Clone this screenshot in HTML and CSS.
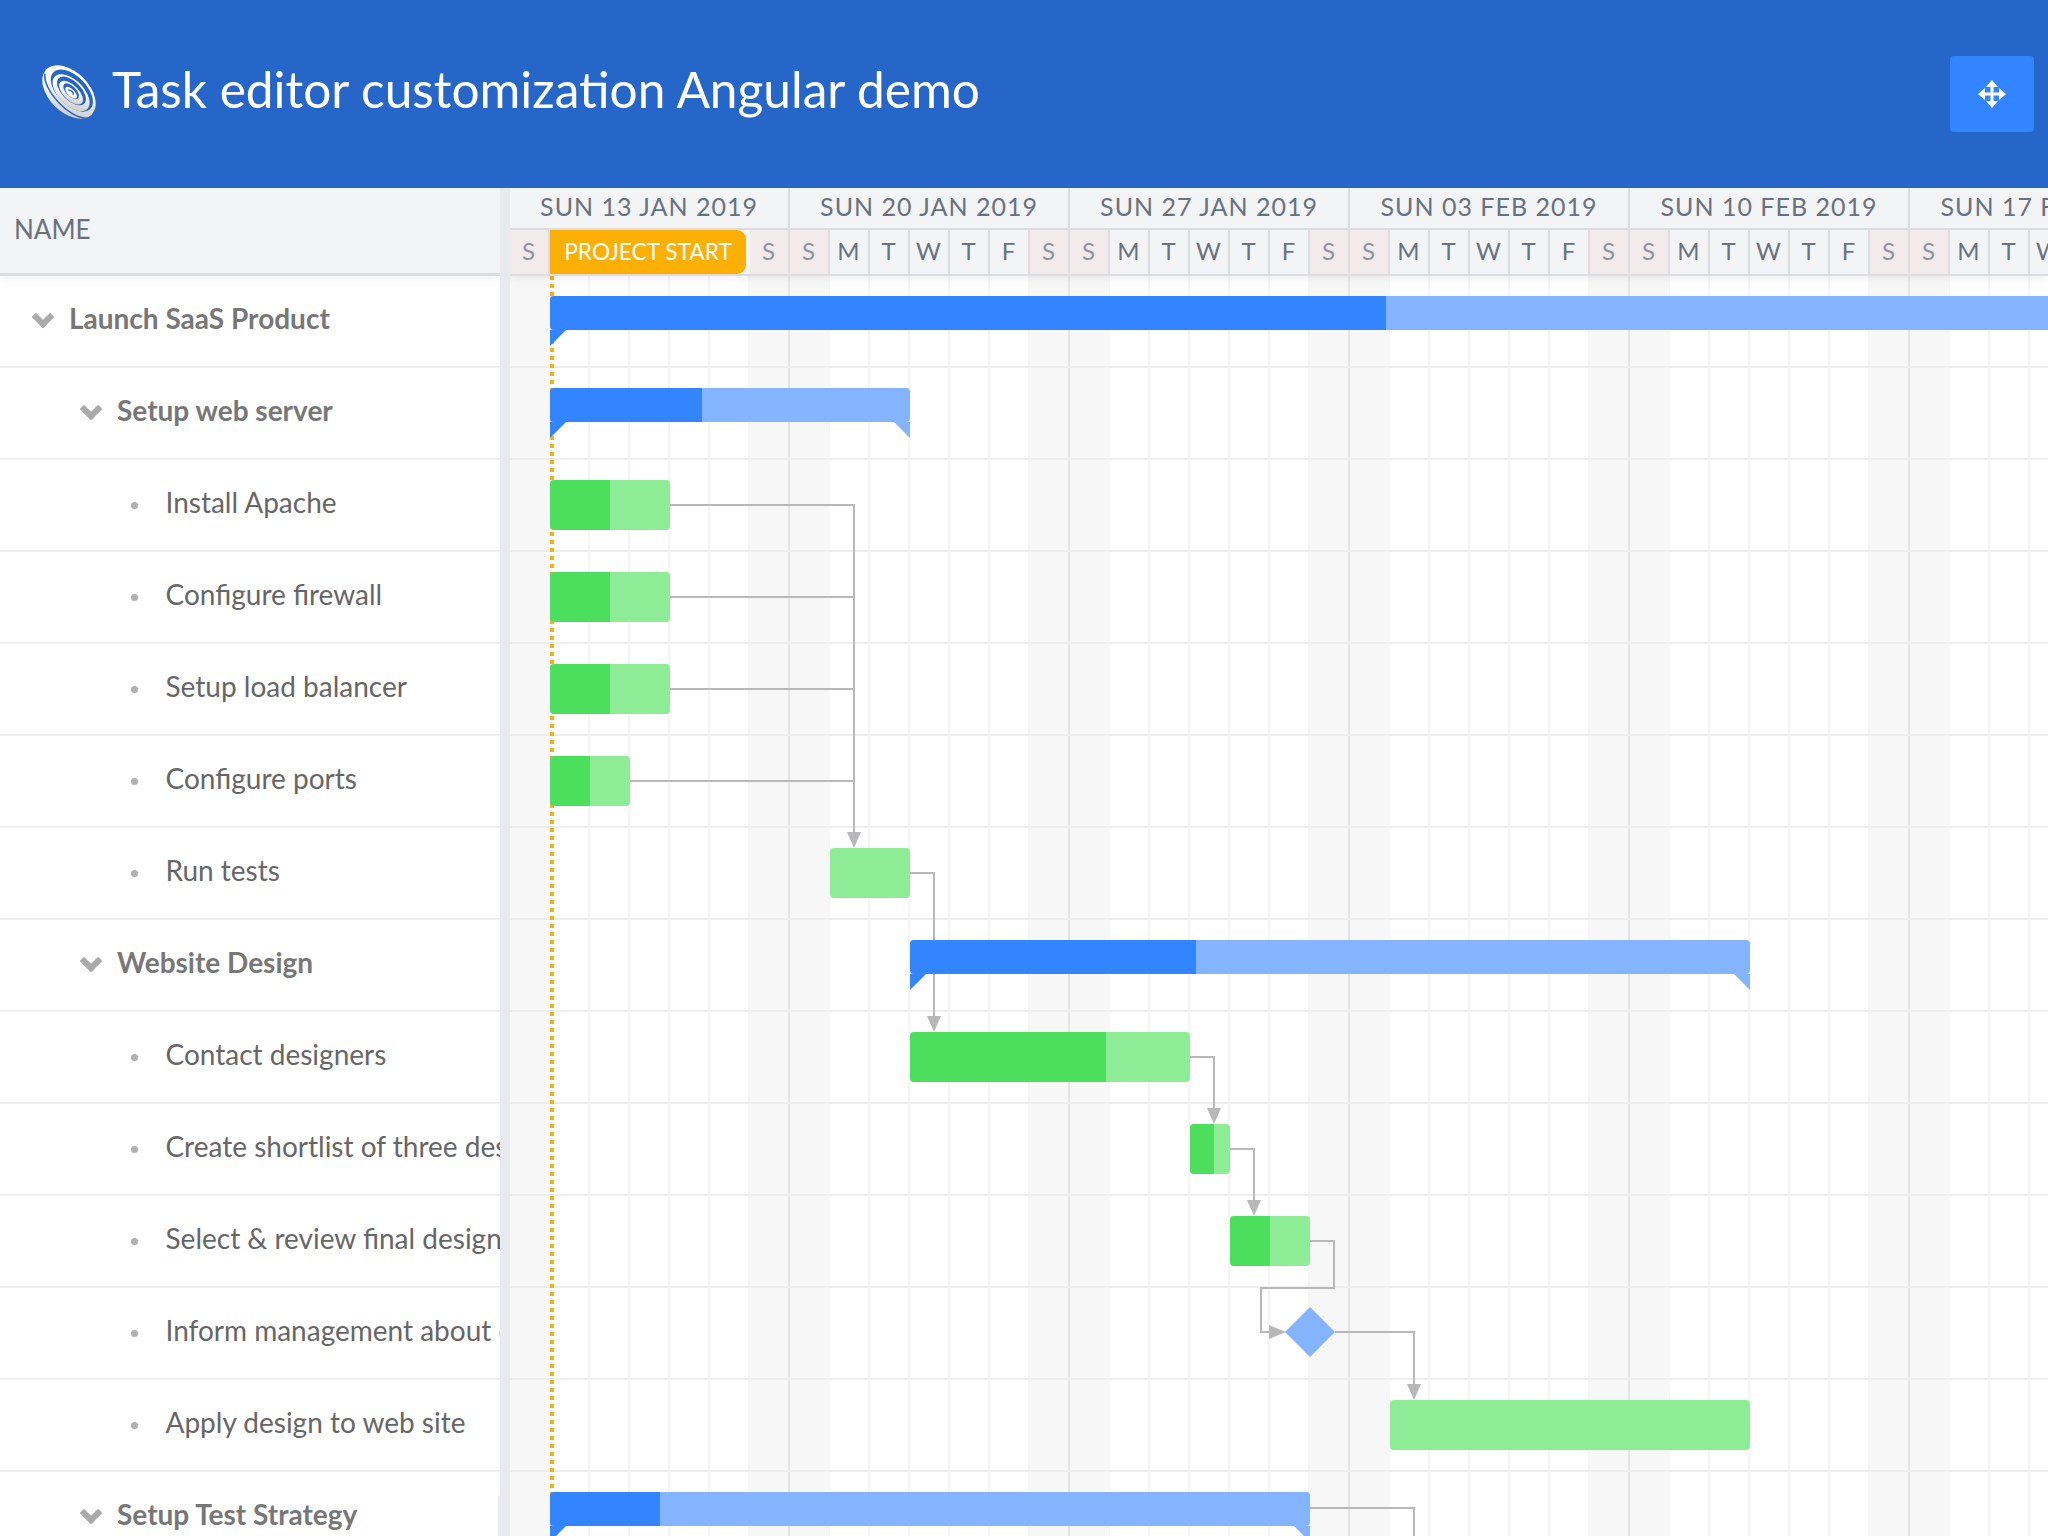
FILE: index.html
```html
<!DOCTYPE html>
<html lang="en">
<head>
    <meta charset="UTF-8">
    <title>Task editor customization Angular demo</title>
    <link rel="stylesheet" href="styles.css">
</head>
<body>
    <header class="topbar">
        <svg class="logo" viewBox="0 0 54 54">
            <defs>
                <linearGradient id="logoFill" x1="0" y1="0" x2="1" y2="1">
                    <stop offset="0.4" stop-color="#ffffff"/>
                    <stop offset="1" stop-color="#bdbdbd"/>
                </linearGradient>
            </defs>
            <g transform="rotate(45 27 27)">
                <ellipse cx="27" cy="27" rx="32" ry="20" fill="url(#logoFill)"/>
                <path d="M-3 31C6 44 46 46 58 33" fill="none" stroke="#2566c8" stroke-width="1.500"/>
                <ellipse cx="28" cy="24" rx="26" ry="14.500" fill="#2566c8"/>
                <ellipse cx="29" cy="26" rx="23" ry="12.500" fill="url(#logoFill)"/>
                <ellipse cx="28" cy="24.500" rx="18" ry="9.500" fill="#2566c8"/>
                <ellipse cx="29" cy="26" rx="15" ry="7.500" fill="url(#logoFill)"/>
                <ellipse cx="28" cy="25" rx="10" ry="5" fill="#2566c8"/>
                <ellipse cx="29" cy="26" rx="7.500" ry="3.500" fill="#fff"/>
                <path d="M25 26c2-2 6-2 7 0" fill="none" stroke="#2566c8" stroke-width="1.500"/>
            </g>
        </svg>
        <h1 class="title">Task editor customization Angular demo</h1>
        <button class="expand-btn" type="button">
            <svg viewBox="0 0 28 28" class="expand-icon">
                <path d="M14 0l6 7h-4.500v5.500H21V8l7 6-7 6v-4.500h-5.500V21H20l-6 7-6-7h4.500v-5.500H7V20l-7-6 7-6v4.500h5.500V7H8z" fill="#fff"/>
            </svg>
        </button>
    </header>

    <div class="gantt">
        <section class="side">
            <div class="side-head">NAME</div>
            <div class="tree">
                <div class="tree-row parent"><span class="chevron"></span>Launch SaaS Product</div>
                <div class="tree-row parent lvl1"><span class="chevron"></span>Setup web server</div>
                <div class="tree-row leaf"><span class="dot"></span>Install Apache</div>
                <div class="tree-row leaf"><span class="dot"></span>Configure firewall</div>
                <div class="tree-row leaf"><span class="dot"></span>Setup load balancer</div>
                <div class="tree-row leaf"><span class="dot"></span>Configure ports</div>
                <div class="tree-row leaf"><span class="dot"></span>Run tests</div>
                <div class="tree-row parent lvl1"><span class="chevron"></span>Website Design</div>
                <div class="tree-row leaf"><span class="dot"></span>Contact designers</div>
                <div class="tree-row leaf"><span class="dot"></span>Create shortlist of three designers</div>
                <div class="tree-row leaf"><span class="dot"></span>Select &amp; review final design</div>
                <div class="tree-row leaf"><span class="dot"></span>Inform management about decision</div>
                <div class="tree-row leaf"><span class="dot"></span>Apply design to web site</div>
                <div class="tree-row parent lvl1 last"><span class="chevron"></span>Setup Test Strategy</div>
            </div>
        </section>

        <div class="splitter"></div>

        <section class="timeline">
            <div class="time-head">
                <div class="weeks">
                    <div class="week">SUN 13 JAN 2019</div>
                    <div class="week">SUN 20 JAN 2019</div>
                    <div class="week">SUN 27 JAN 2019</div>
                    <div class="week">SUN 03 FEB 2019</div>
                    <div class="week">SUN 10 FEB 2019</div>
                    <div class="week">SUN 17 FEB 2019</div>
                </div>
                <div class="days">
                    <span class="day off">S</span><span class="day hidden-day"></span><span class="day hidden-day"></span><span class="day hidden-day"></span><span class="day hidden-day"></span><span class="day hidden-day"></span><span class="day off">S</span>
                    <span class="day off">S</span><span class="day">M</span><span class="day">T</span><span class="day">W</span><span class="day">T</span><span class="day">F</span><span class="day off">S</span>
                    <span class="day off">S</span><span class="day">M</span><span class="day">T</span><span class="day">W</span><span class="day">T</span><span class="day">F</span><span class="day off">S</span>
                    <span class="day off">S</span><span class="day">M</span><span class="day">T</span><span class="day">W</span><span class="day">T</span><span class="day">F</span><span class="day off">S</span>
                    <span class="day off">S</span><span class="day">M</span><span class="day">T</span><span class="day">W</span><span class="day">T</span><span class="day">F</span><span class="day off">S</span>
                    <span class="day off">S</span><span class="day">M</span><span class="day">T</span><span class="day">W</span>
                </div>
                <div class="project-start">PROJECT START</div>
            </div>

            <div class="chart">
                <div class="start-line"></div>

                <!-- connectors, coordinates are relative to the chart (x-510, y-276) -->
                <svg class="links" width="1538" height="1260">
                    <g fill="none" stroke="#b8b8b8" stroke-width="2">
                        <path d="M160 229H344V556"/>
                        <path d="M160 321H344"/>
                        <path d="M160 413H344"/>
                        <path d="M120 505H344"/>
                        <path d="M400 597H424V742"/>
                        <path d="M680 781H704V834"/>
                        <path d="M720 873H744V926"/>
                        <path d="M800 965H824V1012H751V1056H760"/>
                        <path d="M825 1056H904V1110"/>
                        <path d="M800 1232H904V1260"/>
                    </g>
                    <g fill="#b8b8b8">
                        <path d="M337 556h14l-7 16z"/>
                        <path d="M417 740h14l-7 16z"/>
                        <path d="M697 832h14l-7 16z"/>
                        <path d="M737 924h14l-7 16z"/>
                        <path d="M759 1049v14l17-7z"/>
                        <path d="M897 1108h14l-7 16z"/>
                    </g>
                </svg>

                <div class="row">
                    <div class="bar summary left-tail" style="left:40px;width:1520px"><div class="done" style="width:836px"></div></div>
                </div>
                <div class="row">
                    <div class="bar summary left-tail right-tail" style="left:40px;width:360px"><div class="done" style="width:152px"></div></div>
                </div>
                <div class="row">
                    <div class="bar task" style="left:40px;width:120px"><div class="done" style="width:60px"></div></div>
                </div>
                <div class="row">
                    <div class="bar task" style="left:40px;width:120px"><div class="done" style="width:60px"></div></div>
                </div>
                <div class="row">
                    <div class="bar task" style="left:40px;width:120px"><div class="done" style="width:60px"></div></div>
                </div>
                <div class="row">
                    <div class="bar task" style="left:40px;width:80px"><div class="done" style="width:40px"></div></div>
                </div>
                <div class="row">
                    <div class="bar task" style="left:320px;width:80px"></div>
                </div>
                <div class="row">
                    <div class="bar summary left-tail right-tail" style="left:400px;width:840px"><div class="done" style="width:286px"></div></div>
                </div>
                <div class="row">
                    <div class="bar task" style="left:400px;width:280px"><div class="done" style="width:196px"></div></div>
                </div>
                <div class="row">
                    <div class="bar task" style="left:680px;width:40px"><div class="done" style="width:24px"></div></div>
                </div>
                <div class="row">
                    <div class="bar task" style="left:720px;width:80px"><div class="done" style="width:40px"></div></div>
                </div>
                <div class="row">
                    <div class="milestone" style="left:775px"></div>
                </div>
                <div class="row">
                    <div class="bar task" style="left:880px;width:360px"></div>
                </div>
                <div class="row">
                    <div class="bar summary left-tail right-tail" style="left:40px;width:760px"><div class="done" style="width:110px"></div></div>
                </div>
            </div>
        </section>
    </div>
</body>
</html>
```

FILE: styles.css
```css
* {
    box-sizing: border-box;
}

body {
    margin: 0;
    height: 1536px;
    overflow: hidden;
    background-color: #fff;
    font-family: Lato, "Open Sans", sans-serif;
}

/* top bar */
.topbar {
    display: flex;
    align-items: center;
    height: 188px;
    padding: 0 14px 0 42px;
    background-color: #2566c8;
}

.logo {
    width: 54px;
    height: 54px;
    margin-top: -4px;
    flex: none;
}

.title {
    flex: 1;
    margin: -10px 0 0 16px;
    font-size: 49.6px;
    font-weight: 400;
    color: #fff;
}

.expand-btn {
    display: flex;
    align-items: center;
    justify-content: center;
    width: 84px;
    height: 76px;
    padding: 0;
    border: none;
    border-radius: 4px;
    background-color: #3385ff;
}

.expand-icon {
    width: 28px;
    height: 28px;
}

/* gantt */
.gantt {
    display: flex;
    height: 1348px;
}

.side {
    width: 500px;
    flex: none;
    overflow: hidden;
}

.side-head {
    position: relative;
    display: flex;
    align-items: center;
    height: 88px;
    padding-left: 14px;
    padding-bottom: 4px;
    font-size: 26px;
    color: #68727f;
    background-color: #f3f4f6;
    border-bottom: 3px solid #dcdde0;
    box-shadow: 0 3px 10px rgba(0, 0, 0, 0.06);
}

.tree-row {
    position: relative;
    display: flex;
    align-items: center;
    height: 92px;
    padding-bottom: 7px;
    font-size: 28px;
    white-space: nowrap;
    border-bottom: 2px solid #eee;
}

.parent {
    padding-left: 32px;
    font-weight: 700;
    color: #777;
}

.lvl1 {
    padding-left: 80px;
}

.leaf {
    padding-left: 131px;
    color: #666;
}

/* splitter is 2px wider next to the last row */
.last::after {
    content: "";
    position: absolute;
    top: 24px;
    right: 0;
    width: 2px;
    height: 68px;
    background-color: #e9eaed;
}

.chevron {
    flex: none;
    width: 16px;
    height: 16px;
    margin: 0 18px 0 3px;
    transform: translateY(-1px) rotate(45deg);
    border-right: 6px solid #aaa;
    border-bottom: 6px solid #aaa;
}

.dot {
    flex: none;
    width: 7px;
    height: 7px;
    margin-right: 27.5px;
    margin-top: 7px;
    border-radius: 50%;
    background-color: #b0b0b0;
}

.splitter {
    width: 10px;
    flex: none;
    background-color: #e9eaed;
}

.timeline {
    flex: 1;
    min-width: 0;
    overflow: hidden;
}

.time-head {
    position: relative;
    z-index: 3;
    height: 88px;
    background-color: #f3f4f6;
    border-bottom: 2px solid #dcdde0;
    box-shadow: 0 3px 10px rgba(0, 0, 0, 0.06);
}

.weeks {
    display: flex;
    height: 42px;
    border-bottom: 2px solid #dcdde0;
}

.week {
    flex: none;
    width: 280px;
    padding-bottom: 6px;
    line-height: 36px;
    text-align: center;
    font-size: 25px;
    letter-spacing: 1px;
    white-space: nowrap;
    color: #68727f;
    border-right: 2px solid #dcdde0;
}

.days {
    display: flex;
    height: 44px;
}

.day {
    flex: none;
    width: 40px;
    padding-right: 1px;
    line-height: 42px;
    text-align: center;
    font-size: 24px;
    color: #68727f;
    border-right: 2px solid #dcdde0;
}

.hidden-day {
    border-right: none;
}

.off {
    color: #8e939c;
    background-color: #f3eaeb;
}

.project-start {
    position: absolute;
    left: 40px;
    top: 42px;
    width: 196px;
    height: 44px;
    line-height: 43px;
    text-align: center;
    font-size: 22.7px;
    color: #fff;
    background-color: #fcaf05;
    border-radius: 0 9px 9px 0;
}

.chart {
    position: relative;
    height: 1260px;
    background-image:
        repeating-linear-gradient(90deg, transparent 0, transparent 278px, #e6e6e6 278px, #e6e6e6 280px),
        repeating-linear-gradient(90deg, #f7f7f7 0, #f7f7f7 40px, transparent 40px, transparent 240px, #f7f7f7 240px, #f7f7f7 280px),
        repeating-linear-gradient(90deg, transparent 0, transparent 38px, #f5f5f5 38px, #f5f5f5 40px);
}

.start-line {
    position: absolute;
    z-index: 1;
    left: 40px;
    top: 0;
    width: 4px;
    height: 100%;
    background-image: repeating-linear-gradient(180deg, #fcaf05 0, #fcaf05 4px, transparent 4px, transparent 8px);
}

.links {
    position: absolute;
    z-index: 1;
    left: 0;
    top: 0;
}

.row {
    position: relative;
    height: 92px;
    border-bottom: 2px solid #eee;
}

.bar {
    position: absolute;
    z-index: 2;
    top: 20px;
    border-radius: 4px;
}

.task {
    height: 50px;
    overflow: hidden;
    background-color: #8eeb96;
}

.summary {
    height: 34px;
    background-color: #85b4ff;
}

.task .done {
    height: 100%;
    background-color: #4cdf5e;
}

.summary .done {
    height: 100%;
    border-radius: 4px 0 0 4px;
    background-color: #3385ff;
}

/* little hooks hanging under the summary bars */
.left-tail::before,
.right-tail::after {
    content: "";
    position: absolute;
    top: 34px;
    width: 16px;
    height: 16px;
}

.left-tail::before {
    left: 0;
    background-color: #3385ff;
    clip-path: polygon(0 0, 100% 0, 0 100%);
}

.right-tail::after {
    right: 0;
    background-color: #85b4ff;
    clip-path: polygon(0 0, 100% 0, 100% 100%);
}

.milestone {
    position: absolute;
    z-index: 2;
    top: 19px;
    width: 50px;
    height: 50px;
    background-color: #85b4ff;
    clip-path: polygon(50% 0, 100% 50%, 50% 100%, 0 50%);
}
```
